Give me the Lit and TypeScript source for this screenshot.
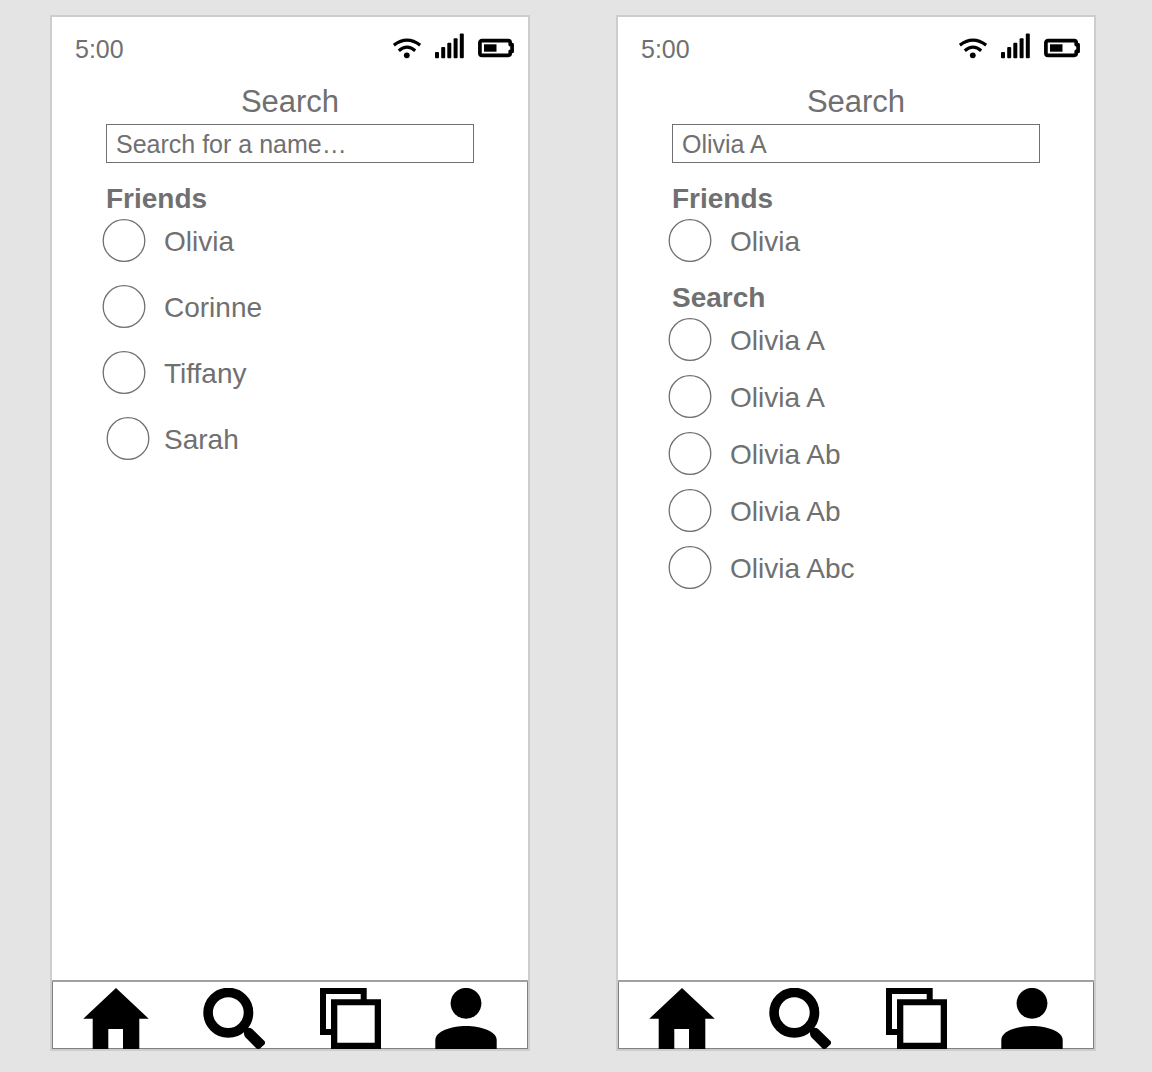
import { LitElement, html, css, svg } from "lit";
import { customElement, property } from "lit/decorators.js";
import { classMap } from "lit/directives/class-map.js";

interface Person {
  name: string;
  inset?: boolean;
}

interface Section {
  title: string;
  people: Person[];
}

interface Screen {
  query: string;
  compact: boolean;
  sections: Section[];
}

const SCREENS: Screen[] = [
  {
    query: "",
    compact: false,
    sections: [
      {
        title: "Friends",
        people: [
          { name: "Olivia" },
          { name: "Corinne" },
          { name: "Tiffany" },
          { name: "Sarah", inset: true },
        ],
      },
    ],
  },
  {
    query: "Olivia A",
    compact: true,
    sections: [
      { title: "Friends", people: [{ name: "Olivia" }] },
      {
        title: "Search",
        people: [
          { name: "Olivia A" },
          { name: "Olivia A" },
          { name: "Olivia Ab" },
          { name: "Olivia Ab" },
          { name: "Olivia Abc" },
        ],
      },
    ],
  },
];

const NAV_ITEMS = [
  {
    label: "Home",
    width: 66,
    art: svg`<path d="M33 0L65.7 30.7H56.3V61H40V41H25.3V61H9.7V30.7H.3Z"/>`,
  },
  {
    label: "Search",
    width: 62,
    art: svg`<circle cx="25.3" cy="24.7" r="20.2" fill="none" stroke="#000" stroke-width="9.6"/>
      <path d="M41 42.8Q40.8 41.6 42 40.8L43.2 40.1Q46.8 39.1 49.2 41.1L61.2 52.8Q63 54.7 61.4 56.4L57 60.6Q55.2 61.8 53.3 60.2L42.1 49Q40.6 46.8 41 42.8Z"/>`,
  },
  {
    label: "Collections",
    width: 61,
    art: svg`<path d="M0 0H46.7V14H40.7V6H6V41H14V47H0Z"/>
      <path fill-rule="evenodd" d="M11 11.3H61V61H11ZM17.3 17.3V54.7H54.7V17.3Z"/>`,
  },
  {
    label: "Profile",
    width: 62,
    art: svg`<circle cx="31" cy="15.3" r="15.4"/>
      <path d="M.3 61V52C.3 43.5 16 38 31 38S61.7 43.5 61.7 52V61Z"/>`,
  },
];

@customElement("phone-screen")
class PhoneScreen extends LitElement {
  @property({ attribute: false }) screen!: Screen;

  static styles = css`
    :host {
      display: flex;
      flex-direction: column;
      flex: 1 1 0;
      min-width: 0;
      box-sizing: border-box;
      border: 2px solid #cdcdcd;
      background: #fff;
      color: #707070;
    }
    .status {
      display: flex;
      justify-content: space-between;
      padding: 16px 14px 0 23px;
      font-size: 25px;
      line-height: 32px;
    }
    .indicators {
      display: flex;
      gap: 14px;
    }
    .indicators svg {
      display: block;
    }
    .content {
      display: flex;
      flex: 1;
      flex-direction: column;
      padding: 19px 54px 24px;
    }
    .title {
      margin: 0 0 4px;
      font-size: 31px;
      font-weight: 400;
      line-height: 36px;
      text-align: center;
    }
    .search {
      box-sizing: border-box;
      width: 100%;
      height: 39px;
      margin: 0;
      padding: 2px 9px 0;
      border: 1px solid #707070;
      border-radius: 0;
      outline: none;
      background: #fff;
      color: inherit;
      font: inherit;
      font-size: 25px;
    }
    .search::placeholder {
      color: inherit;
      opacity: 1;
    }
    .section {
      margin-top: 20px;
    }
    .heading {
      margin: 0 0 4px;
      font-size: 28px;
      font-weight: 700;
      line-height: 32px;
    }
    .people {
      display: flex;
      flex-direction: column;
      gap: 23px;
      margin: 0 0 0 -4px;
      padding: 0;
      list-style: none;
    }
    .people.compact {
      gap: 14px;
    }
    .person {
      display: grid;
      grid-template-columns: 62px 1fr;
      align-items: center;
      font-size: 28px;
      line-height: 32px;
    }
    .avatar {
      display: block;
    }
    .avatar.inset {
      margin-left: 4px;
    }
    .name {
      padding-top: 3px;
    }
    .nav {
      display: flex;
      justify-content: space-between;
      align-items: flex-end;
      height: 69px;
      padding: 0 31px;
      box-shadow: inset 0 2px #a0a0a0, inset 0 0 0 1px #808080;
    }
    .nav-item {
      display: block;
      padding: 0;
      border: 0;
      background: none;
      cursor: pointer;
    }
    .nav-item svg {
      display: block;
    }
  `;

  render() {
    const { query, compact, sections } = this.screen;
    return html`
      <div class="status">
        <span>5:00</span>
        <div class="indicators">
          <svg width="28" height="32" viewBox="0 0 28 32" aria-hidden="true">
            <g fill="none" stroke="#000" stroke-width="3.2">
              <path d="M.9 12.2Q14 2.2 27.1 12.2" />
              <path d="M5.8 17.7Q14 10.6 22.2 17.7" />
            </g>
            <circle cx="13.8" cy="22.3" r="2.9" />
          </svg>
          <svg width="29" height="32" viewBox="0 0 29 32" aria-hidden="true">
            <rect x="0" y="19" width="4" height="6.3" rx="1" />
            <rect x="6.2" y="14" width="4" height="11.3" rx="1" />
            <rect x="12.3" y="9.7" width="4" height="15.6" rx="1" />
            <rect x="18.6" y="5.2" width="4" height="20.1" rx="1" />
            <rect x="24.8" y=".6" width="4" height="24.7" rx="1" />
          </svg>
          <svg width="36" height="32" viewBox="0 0 36 32" aria-hidden="true">
            <path
              d="M4 7.7H30.2Q32.2 7.7 32.2 9.7V11.6H34.1V18.4H32.2V20.3Q32.2 22.3 30.2 22.3H4Q1.9 22.3 1.9 20.2V9.8Q1.9 7.7 4 7.7Z"
              fill="none"
              stroke="#000"
              stroke-width="3.7"
              stroke-linejoin="round"
            />
            <rect x="6" y="11.3" width="12.5" height="7.4" />
          </svg>
        </div>
      </div>
      <main class="content">
        <h1 class="title"><label for="query">Search</label></h1>
        <input
          class="search"
          id="query"
          type="text"
          placeholder="Search for a name…"
          .value=${query}
        />
        ${sections.map(
          (section) => html`
            <section class="section">
              <h2 class="heading">${section.title}</h2>
              <ul class=${classMap({ people: true, compact })}>
                ${section.people.map(
                  (person) => html`
                    <li class="person">
                      <svg
                        class=${classMap({ avatar: true, inset: !!person.inset })}
                        width="44"
                        height="43"
                        viewBox="0 0 44 43"
                        aria-hidden="true"
                      >
                        <circle cx="22" cy="21.5" r="20.8" fill="#fff" stroke="#707070" stroke-width="1.3" />
                      </svg>
                      <span class="name">${person.name}</span>
                    </li>
                  `,
                )}
              </ul>
            </section>
          `,
        )}
      </main>
      <nav class="nav">
        ${NAV_ITEMS.map(
          (item) => html`
            <button class="nav-item" type="button" aria-label=${item.label}>
              <svg width=${item.width} height="61" viewBox="0 0 ${item.width} 61" aria-hidden="true">
                ${item.art}
              </svg>
            </button>
          `,
        )}
      </nav>
    `;
  }
}

@customElement("app-root")
class AppRoot extends LitElement {
  static styles = css`
    :host {
      display: flex;
      gap: 86px;
      box-sizing: border-box;
      min-height: 100vh;
      padding: 15px 56px 21px 50px;
      background: #e4e4e4;
      font-family: "Liberation Sans", Arial, Helvetica, sans-serif;
    }
  `;

  render() {
    return SCREENS.map((screen) => html`<phone-screen .screen=${screen}></phone-screen>`);
  }
}
